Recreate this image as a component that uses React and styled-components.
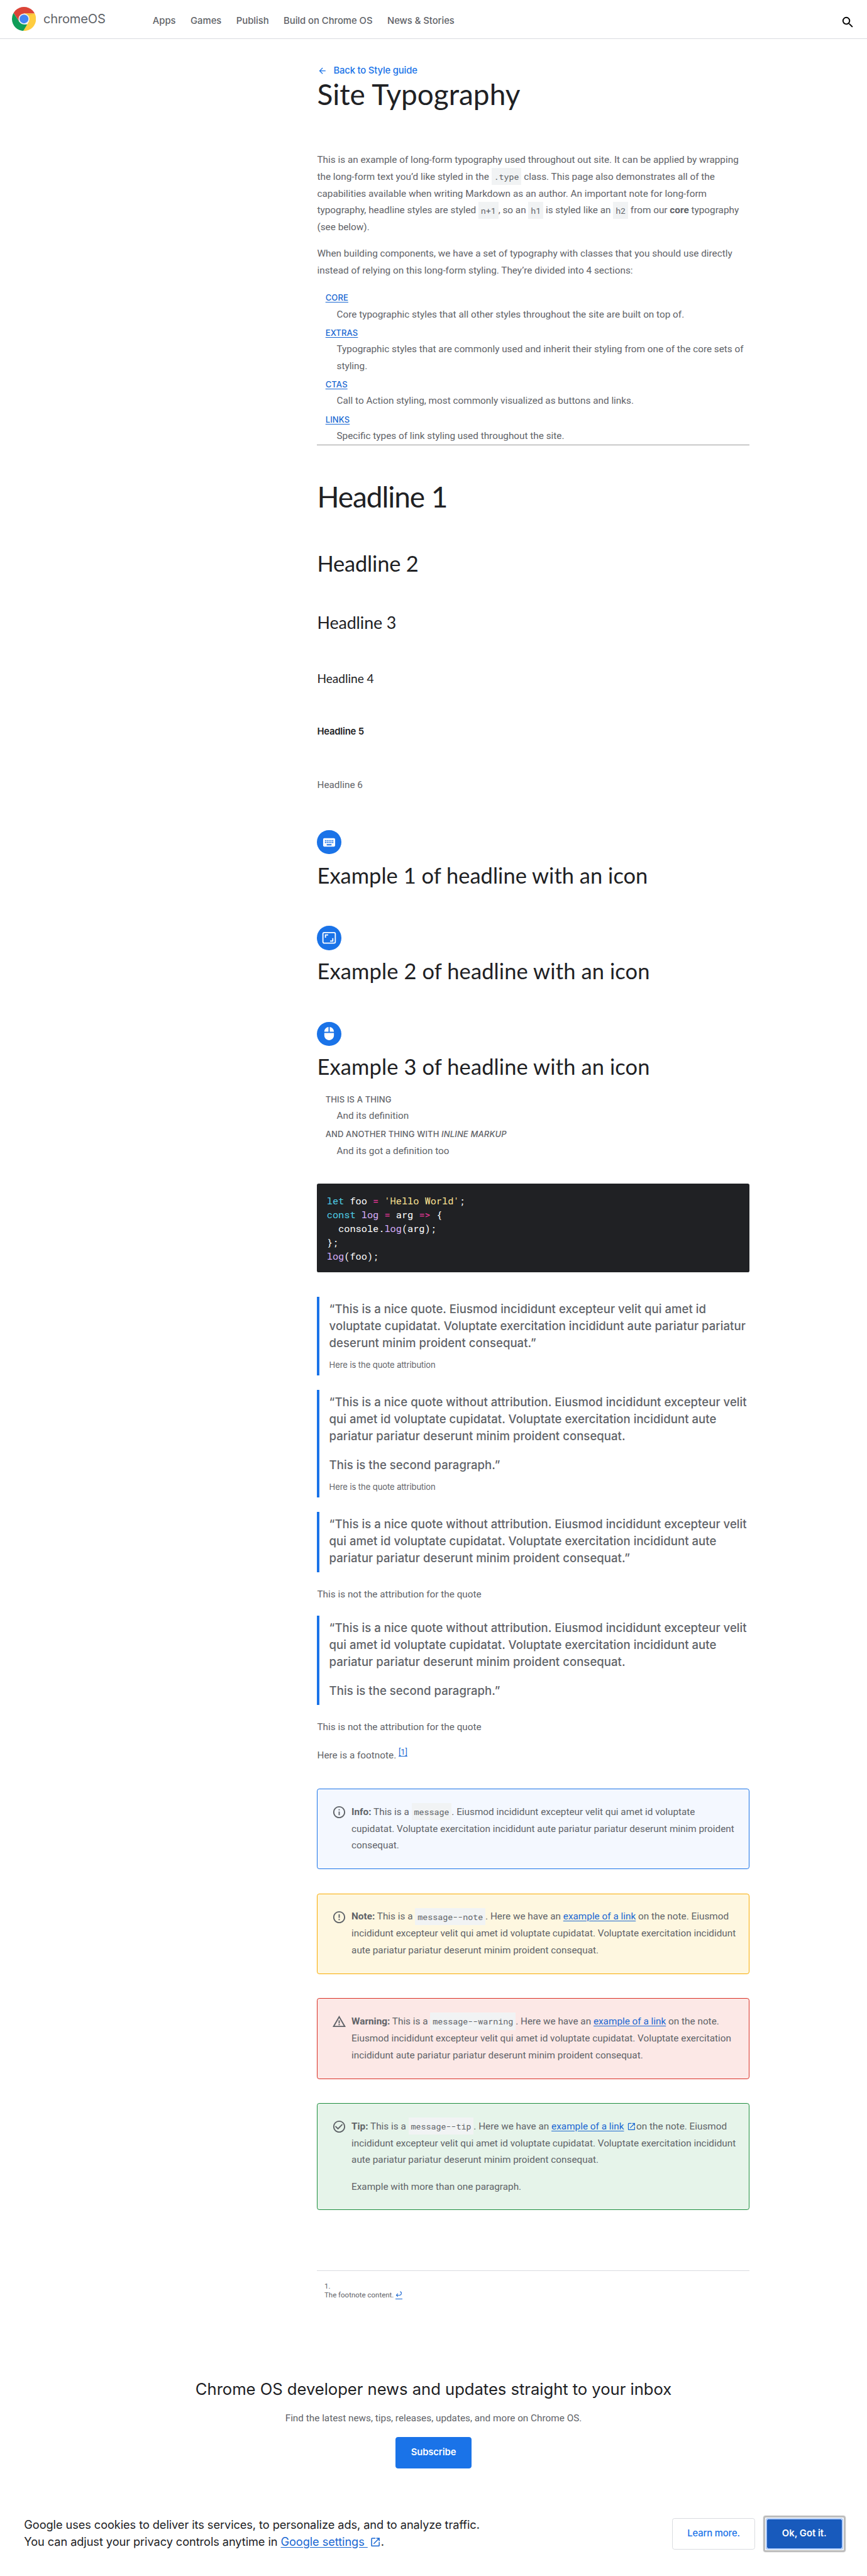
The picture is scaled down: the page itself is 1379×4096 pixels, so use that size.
import React from "react";
import styled, { createGlobalStyle, css } from "styled-components";
import {
  MdSearch,
  MdArrowBack,
  MdKeyboard,
  MdOutlineInfo,
  MdErrorOutline,
  MdWarningAmber,
  MdCheckCircleOutline,
  MdOpenInNew,
} from "react-icons/md";

const r = (n) => `${n / 10}rem`;

const display = '"Google Sans", Lato, "Liberation Sans", sans-serif';
const label = '"Google Sans Text", Inter, "Liberation Sans", sans-serif';
const body = 'Roboto, "Liberation Sans", sans-serif';
const mono = '"Roboto Mono", "DejaVu Sans Mono", "Liberation Mono", monospace';

const color = {
  ink: "#202124",
  grey: "#5f6368",
  line: "#dadce0",
  blue: "#1a73e8",
  deepBlue: "#185abc",
  link: "#1967d2",
};

/* 1rem is ten design pixels of the 1440 wide grid */
const GlobalStyle = createGlobalStyle`
  *, *::before, *::after { box-sizing: border-box; }
  html { font-size: calc(100vw / 144); }
  body {
    margin: 0;
    background: #fff;
    color: ${color.grey};
    font-family: ${body};
    font-size: ${r(16)};
    line-height: ${r(28)};
  }
  h1, h2, h3, h4, h5, h6, p, dl, dd, pre, blockquote { margin: 0; }
  svg { display: block; }
`;

/* ---------- header ---------- */

const Header = styled.header`
  display: flex;
  align-items: center;
  height: ${r(65)};
  padding: 0 ${r(20)};
  border-bottom: 1px solid ${color.line};
`;

const Brand = styled.a`
  display: flex;
  align-items: center;
  gap: ${r(12)};
  width: ${r(233.6)};
  font: 400 ${r(21)} / ${r(28)} ${label};
  letter-spacing: ${r(-0.2)};
  color: ${color.grey};
  svg {
    width: ${r(40)};
    height: ${r(40)};
  }
`;

const Nav = styled.nav`
  display: flex;
  gap: ${r(24.6)};
  padding-top: ${r(5)};
  font: 500 ${r(15.5)} / ${r(24)} ${label};
  letter-spacing: ${r(-0.04)};
`;

const NavLink = styled.a`
  color: ${color.grey};
  white-space: nowrap;
`;

const SearchButton = styled.button`
  display: flex;
  margin: ${r(10)} 0 0 auto;
  padding: 0;
  border: 0;
  background: none;
  color: #000;
  font-size: ${r(24)};
`;

/* ---------- article ---------- */

const Article = styled.main`
  width: ${r(718.4)};
  margin: ${r(40.4)} 0 0 ${r(526.8)};
`;

const BackLink = styled.a`
  display: flex;
  align-items: center;
  gap: ${r(10.3)};
  padding-left: ${r(0.8)};
  font: 500 ${r(15.5)} / ${r(24)} ${label};
  letter-spacing: ${r(-0.17)};
  color: ${color.blue};
  svg {
    width: ${r(16)};
    height: ${r(16)};
  }
`;

const Heading = styled.h2`
  margin-top: ${(p) => r(p.$top)};
  font: 400 ${(p) => r(p.$size)} / ${(p) => r(p.$size < 17 ? 24 : p.$size + 8)} ${display};
  letter-spacing: ${(p) => r(p.$track || 0)};
  color: ${color.ink};
  ${(p) =>
    p.$strong &&
    css`
      font-family: ${label};
      font-weight: 600;
    `}
  ${(p) =>
    p.$plain &&
    css`
      font-family: ${body};
      color: ${color.grey};
    `}
`;

const Paragraph = styled.p`
  margin-top: ${(p) => r(p.$top)};
`;

const Chip = styled.code`
  padding: ${r(5)} ${r(4)} ${r(4.6)};
  background: #f1f3f4;
  font: 400 ${r(14)} / 1 ${mono};
  letter-spacing: ${r(-0.03)};
`;

const Link = styled.a`
  color: ${color.link};
  text-decoration: underline;
  text-underline-offset: ${r(2)};
`;

const Definitions = styled.dl`
  margin-top: ${(p) => r(p.$top)};
`;

const Term = styled.dt`
  height: ${r(30)};
  padding: ${r(5.6)} 0 0 ${r(13.8)};
  font: 500 ${r(13.6)} / ${r(22)} ${label};
  letter-spacing: ${r(0.13)};
  text-transform: uppercase;
`;

const Detail = styled.dd`
  padding-left: ${r(32.4)};
`;

const Rule = styled.hr`
  height: 1px;
  margin: 0;
  border: 0;
  background: #9a9a9a;
`;

const IconBadge = styled.div`
  display: flex;
  align-items: center;
  justify-content: center;
  width: ${r(40)};
  height: ${r(40)};
  margin-top: ${(p) => r(p.$top)};
  border-radius: 50%;
  background: ${color.blue};
  color: #fff;
  font-size: ${r(24)};
`;

const CodeBlock = styled.pre`
  height: ${r(147)};
  margin-top: ${r(40.4)};
  padding: ${r(16)};
  border-radius: ${r(3)};
  background: ${color.ink};
  color: #fff;
  font: 400 ${r(16)} / ${r(23.1)} ${mono};
  letter-spacing: ${r(-0.03)};
`;

const tokenColors = {
  keyword: "#4ecde6",
  operator: "#f538a0",
  string: "#fde293",
  call: "#d7aefb",
};

const Token = styled.span`
  color: ${(p) => tokenColors[p.$kind]};
`;

const Quote = styled.blockquote`
  height: ${(p) => r(p.$height)};
  margin-top: ${(p) => r(p.$top)};
  padding: ${r(6.6)} 0 0 ${r(15.8)};
  border-left: 4px solid ${color.blue};
  font: 500 ${r(19.4)} / ${r(28)} ${label};
  letter-spacing: ${r(0.03)};
  white-space: nowrap;
  p + p {
    margin-top: ${r(20)};
  }
`;

const Attribution = styled.footer`
  margin-top: ${r(15.4)};
  font: 400 ${r(13.6)} / ${r(16)} ${label};
  letter-spacing: ${r(-0.08)};
`;

const FootnoteRef = styled.sup`
  font-size: ${r(13.3)};
  line-height: 0;
  vertical-align: ${r(6)};
`;

const tones = {
  info: ["#1a73e8", "#f4f8ff"],
  note: ["#f9ab00", "#fef7e0"],
  warning: ["#d93025", "#fce8e6"],
  tip: ["#1e8e3e", "#e6f4ea"],
};

const Message = styled.aside`
  display: flex;
  gap: ${r(8)};
  margin-top: ${(p) => r(p.$top)};
  padding: ${r(24)} ${r(20)} ${r(24)} ${r(24)};
  border: 1px solid ${(p) => tones[p.$tone][0]};
  border-radius: ${r(4)};
  background: ${(p) => tones[p.$tone][1]};
  > svg {
    flex: none;
    width: ${r(24)};
    height: ${r(24)};
    margin-top: ${r(2.4)};
  }
  p + p {
    margin-top: ${r(16)};
  }
`;

const InlineIcon = styled.span`
  display: inline-flex;
  vertical-align: ${r(-3)};
  margin-left: ${(p) => r(p.$left)};
  color: ${color.link};
  font-size: ${(p) => r(p.$size)};
`;

const Footnotes = styled.section`
  margin-top: ${r(99.6)};
  padding: ${r(17.8)} 0 0 ${r(12)};
  border-top: 1px solid ${color.line};
  font-size: ${r(12)};
  line-height: ${r(15.3)};
`;

const ReturnLink = styled.a`
  display: inline-block;
  padding-bottom: ${r(2)};
  border-bottom: 1px solid ${color.link};
  vertical-align: ${r(-3)};
  line-height: 0;
  color: ${color.link};
  svg {
    width: ${r(11)};
    height: ${r(11)};
  }
`;

/* ---------- newsletter + cookie bar ---------- */

const Newsletter = styled.section`
  display: flex;
  flex-direction: column;
  align-items: center;
  gap: ${r(16.9)};
  margin-top: ${r(130)};
`;

const NewsTitle = styled.h2`
  font: 400 ${r(26.8)} / ${r(36)} ${label};
  letter-spacing: ${r(-0.05)};
  color: ${color.ink};
`;

const Button = styled.button`
  height: ${(p) => r(p.$inner ? 48 : 52)};
  padding: 0 0 ${r(1)};
  width: ${(p) => r(p.$width)};
  border: 1px solid ${(p) => (p.$outline ? color.line : p.$inner ? color.deepBlue : color.blue)};
  border-radius: ${(p) => r(p.$inner ? 2 : 4)};
  background: ${(p) => (p.$outline ? "#fff" : p.$inner ? color.deepBlue : color.blue)};
  color: ${(p) => (p.$outline ? color.blue : "#fff")};
  font: ${(p) => (p.$outline ? 500 : 600)} ${r(15.5)} / ${r(24)} ${label};
  letter-spacing: ${(p) => r(p.$track)};
`;

const CookieBar = styled.section`
  display: flex;
  align-items: center;
  height: ${r(64)};
  margin-top: ${r(77)};
  padding: 0 ${r(35.7)} 0 ${r(40)};
`;

const CookieText = styled.p`
  margin: ${r(-3)} auto 0 0;
  font: 400 ${r(19)} / ${r(28.2)} ${label};
  letter-spacing: ${r(-0.07)};
  color: ${color.ink};
`;

const FocusRing = styled.div`
  margin-left: ${r(13)};
  padding: 1px;
  border: 3px solid #bdbdbd;
  border-radius: ${r(4)};
  box-shadow: 0 0 ${r(2)} rgba(0, 0, 0, 0.2);
`;

const FocusEdge = styled.div`
  border: 2px solid #aecbfa;
  border-radius: ${r(3)};
  button {
    display: block;
  }
`;

const Logo = () => (
  <svg viewBox="0 0 48 48">
    <defs>
      <clipPath id="disc">
        <circle cx="24" cy="24" r="24" />
      </clipPath>
    </defs>
    <g clipPath="url(#disc)">
      <path fill="#db4437" d="M0 0h48v13.1H24L14.6 29.5 3.2 12z" />
      <path fill="#0f9d58" d="M3.2 12 14.55 29.45 24 34.9h9.45L22.5 48H0V8z" />
      <path fill="#ffcd40" d="M24 13.1h24V48H22.6l10.85-18.55z" />
      <path fill="#f2b52c" opacity=".6" d="M24 13.1h22.6L34 17z" />
      <circle cx="24" cy="24" r="10.9" fill="#f1f1f1" />
      <circle cx="24" cy="24" r="8.8" fill="#4285f4" />
    </g>
  </svg>
);

const AspectIcon = () => (
  <svg viewBox="0 0 24 24" width="1em" height="1em" fill="none" stroke="currentColor" strokeWidth="1.9">
    <rect x="1.7" y="3" width="20.6" height="17.6" rx="2.2" />
    <path d="M5.9 11.4V6.9h4.5M18.1 12.4v4.7h-4.5" />
  </svg>
);

const MouseIcon = () => (
  <svg viewBox="0 0 24 24" width="1em" height="1em" fill="currentColor">
    <path d="M13 1.1V9h7c0-4.1-3.1-7.4-7-7.9zM4 15c0 4.4 3.6 8 8 8s8-3.6 8-8v-4H4zM11 1.1C7.1 1.6 4 4.9 4 9h7z" />
  </svg>
);

const ReturnArrow = () => (
  <svg viewBox="0 0 12 12" fill="none" stroke="currentColor" strokeWidth="1.2">
    <path d="M8.4 1c3.2.6 3.2 6-.7 6.3H1.6M4.4 4.5 1.6 7.3l2.8 2.8" />
  </svg>
);

const navItems = ["Apps", "Games", "Publish", "Build on Chrome OS", "News & Stories"];

const sections = [
  ["Core", "Core typographic styles that all other styles throughout the site are built on top of."],
  [
    "Extras",
    "Typographic styles that are commonly used and inherit their styling from one of the core sets of styling.",
  ],
  ["CTAs", "Call to Action styling, most commonly visualized as buttons and links."],
  ["Links", "Specific types of link styling used throughout the site."],
];

const LongQuote = ({ close }) => (
  <p>
    “This is a nice quote without attribution. Eiusmod incididunt excepteur velit
    <br />
    qui amet id voluptate cupidatat. Voluptate exercitation incididunt aute
    <br />
    pariatur pariatur deserunt minim proident consequat.{close}
  </p>
);

const filler =
  "Eiusmod incididunt excepteur velit qui amet id voluptate cupidatat. Voluptate exercitation incididunt aute pariatur pariatur deserunt minim proident consequat.";

export default function App() {
  return (
    <>
      <GlobalStyle />
      <Header>
        <Brand>
          <Logo />
          chromeOS
        </Brand>
        <Nav>
          {navItems.map((item) => (
            <NavLink key={item}>{item}</NavLink>
          ))}
        </Nav>
        <SearchButton aria-label="Search">
          <MdSearch />
        </SearchButton>
      </Header>

      <Article>
        <BackLink>
          <MdArrowBack />
          Back to Style guide
        </BackLink>
        <Heading as="h1" $top={-0.6} $size={48}>Site Typography</Heading>

        <Paragraph $top={66.9}>
          This is an example of long-form typography used throughout out site. It can be applied by wrapping the
          long-form text you’d like styled in the <Chip>.type</Chip> class. This page also demonstrates all of the
          capabilities available when writing Markdown as an author. An important note for long-form typography,
          headline styles are styled <Chip>n+1</Chip>, so an <Chip>h1</Chip> is styled like an <Chip>h2</Chip> from
          our <strong>core</strong> typography (see below).
        </Paragraph>
        <Paragraph $top={16}>
          When building components, we have a set of typography with classes that you should use directly instead of
          relying on this long-form styling. They’re divided into 4 sections:
        </Paragraph>

        <Definitions $top={14.4}>
          {sections.map(([term, text]) => (
            <React.Fragment key={term}>
              <Term>
                <Link>{term}</Link>
              </Term>
              <Detail>{text}</Detail>
            </React.Fragment>
          ))}
        </Definitions>
        <Rule />

        <Heading $top={58} $size={48} $track={-1.1}>Headline 1</Heading>
        <Heading $top={60.7} $size={36} $track={-0.2}>Headline 2</Heading>
        <Heading $top={58.8} $size={28} $track={-0.1}>Headline 3</Heading>
        <Heading $top={60.4} $size={20} $track={-0.04}>Headline 4</Heading>
        <Heading $top={62.5} $size={15.5} $track={-0.22} $strong>Headline 5</Heading>
        <Heading $top={64} $size={16} $plain>Headline 6</Heading>

        <IconBadge $top={63.2}>
          <MdKeyboard />
        </IconBadge>
        <Heading $top={13} $size={36} $track={0.02}>Example 1 of headline with an icon</Heading>
        <IconBadge $top={62}>
          <AspectIcon />
        </IconBadge>
        <Heading $top={12.8} $size={36} $track={0.12}>Example 2 of headline with an icon</Heading>
        <IconBadge $top={62.1}>
          <MouseIcon />
        </IconBadge>
        <Heading $top={12.8} $size={36} $track={0.12}>Example 3 of headline with an icon</Heading>

        <Definitions $top={16}>
          <Term>This is a thing</Term>
          <Detail>And its definition</Detail>
          <Term>
            And another thing with <em>inline markup</em>
          </Term>
          <Detail>And its got a definition too</Detail>
        </Definitions>

        <CodeBlock>
          <Token $kind="keyword">let</Token> foo <Token $kind="operator">=</Token>{" "}
          <Token $kind="string">'Hello World'</Token>;{"\n"}
          <Token $kind="keyword">const</Token> <Token $kind="call">log</Token>{" "}
          <Token $kind="operator">=</Token> arg <Token $kind="operator">=&gt;</Token> {"{\n"}
          {"  "}console.<Token $kind="call">log</Token>(arg);{"\n"}
          {"};\n"}
          <Token $kind="call">log</Token>(foo);
        </CodeBlock>

        <Quote $top={40.2} $height={130.8}>
          <p>
            “This is a nice quote. Eiusmod incididunt excepteur velit qui amet id
            <br />
            voluptate cupidatat. Voluptate exercitation incididunt aute pariatur pariatur
            <br />
            deserunt minim proident consequat.”
          </p>
          <Attribution>Here is the quote attribution</Attribution>
        </Quote>
        <Quote $top={24} $height={179}>
          <LongQuote />
          <p>This is the second paragraph.”</p>
          <Attribution>Here is the quote attribution</Attribution>
        </Quote>
        <Quote $top={24} $height={100}>
          <LongQuote close="”" />
        </Quote>
        <Paragraph $top={23.2}>This is not the attribution for the quote</Paragraph>
        <Quote $top={20.8} $height={148}>
          <LongQuote />
          <p>This is the second paragraph.”</p>
        </Quote>
        <Paragraph $top={23.5}>This is not the attribution for the quote</Paragraph>
        <Paragraph $top={18.7}>
          Here is a footnote.{" "}
          <FootnoteRef>
            <Link>[1]</Link>
          </FootnoteRef>
        </Paragraph>

        <Message $tone="info" $top={41}>
          <MdOutlineInfo />
          <p>
            <strong>Info:</strong> This is a <Chip>message</Chip>. {filler}
          </p>
        </Message>
        <Message $tone="note" $top={40}>
          <MdErrorOutline />
          <p>
            <strong>Note:</strong> This is a <Chip>message--note</Chip>. Here we have an <Link>example of a link</Link>{" "}
            on the note. {filler}
          </p>
        </Message>
        <Message $tone="warning" $top={40}>
          <MdWarningAmber />
          <p>
            <strong>Warning:</strong> This is a <Chip>message--warning</Chip>. Here we have an{" "}
            <Link>example of a link</Link> on the note. {filler}
          </p>
        </Message>
        <Message $tone="tip" $top={40}>
          <MdCheckCircleOutline />
          <div>
            <p>
              <strong>Tip:</strong> This is a <Chip>message--tip</Chip>. Here we have an{" "}
              <Link>example of a link</Link>
              <InlineIcon $left={5} $size={15.5}>
                <MdOpenInNew />
              </InlineIcon>
              on the note. {filler}
            </p>
            <p>Example with more than one paragraph.</p>
          </div>
        </Message>

        <Footnotes>
          <div>1.</div>
          <div>
            The footnote content.{" "}
            <ReturnLink aria-label="Back to text">
              <ReturnArrow />
            </ReturnLink>
          </div>
        </Footnotes>
      </Article>

      <Newsletter>
        <NewsTitle>Chrome OS developer news and updates straight to your inbox</NewsTitle>
        <p>Find the latest news, tips, releases, updates, and more on Chrome OS.</p>
        <Button $width={127} $track={-0.12}>Subscribe</Button>
      </Newsletter>

      <CookieBar>
        <CookieText>
          Google uses cookies to deliver its services, to personalize ads, and to analyze traffic.
          <br />
          You can adjust your privacy controls anytime in <Link>Google settings </Link>
          <InlineIcon $left={3} $size={19}>
            <MdOpenInNew />
          </InlineIcon>
          .
        </CookieText>
        <Button $width={138.5} $track={-0.15} $outline>Learn more.</Button>
        <FocusRing>
          <FocusEdge>
            <Button $width={124.3} $track={0} $inner>Ok, Got it.</Button>
          </FocusEdge>
        </FocusRing>
      </CookieBar>
    </>
  );
}
